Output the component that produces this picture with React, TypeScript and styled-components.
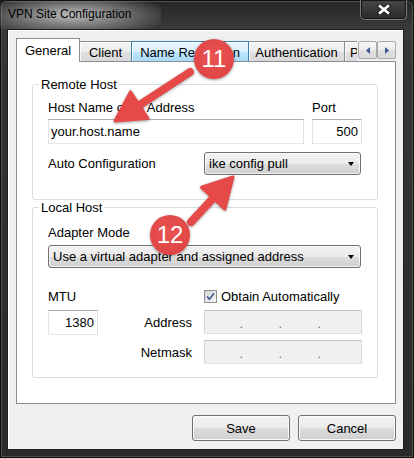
import React from 'react';
import styled, { createGlobalStyle } from 'styled-components';

const FONT = `'Liberation Sans', Arial, sans-serif`;

const GlobalStyle = createGlobalStyle`
  html, body { margin: 0; padding: 0; background: #1c1c1c; }
  body { font-family: ${FONT}; }
  *, *::before, *::after { box-sizing: border-box; }
`;

const Window = styled.div`
  position: relative;
  width: 414px;
  height: 458px;
  display: flex;
  flex-direction: column;
  overflow: hidden;
  border-radius: 7px 7px 0 0;
  background: linear-gradient(180deg, #242424 0px, #3a3a3a 28px, #343434 80px, #2a2a2a 100%);
  box-shadow: inset 0 0 0 1px #0c0c0c, inset 0 0 0 2px #505050;
`;

const TitleBar = styled.div`
  flex: none;
  height: 29px;
  display: flex;
  align-items: flex-start;
  justify-content: space-between;
`;

const Title = styled.div`
  margin-top: 1px;
  padding: 6px 30px 7px 8px;
  font-size: 12px;
  line-height: 15px;
  color: #000;
  background: radial-gradient(ellipse 62% 80% at 45% 50%, rgba(200,200,200,0.92) 0%, rgba(150,150,150,0.6) 55%, rgba(110,110,110,0) 100%);
`;

const CloseButton = styled.div`
  width: 47px;
  height: 20px;
  margin-right: 7px;
  border: 1px solid #7b7b7b;
  border-top: none;
  border-radius: 0 0 5px 5px;
  background: linear-gradient(180deg, #474747, #2a2a2a);
  box-shadow: inset 0 0 0 1px #151515;
  display: flex;
  align-items: center;
  justify-content: center;
`;

const Client = styled.div`
  flex: 1;
  margin: 0 10px 8px 7px;
  border: 1px solid #1e1e1e;
  box-shadow: inset 1px 1px 0 #ffffff;
  background: #f0f0f0;
  padding: 8px 7px 8px 8px;
  display: flex;
  flex-direction: column;
`;

const TabStrip = styled.div`
  flex: none;
  height: 23px;
  display: flex;
  position: relative;
  z-index: 1;
`;

const TabViewport = styled.div`
  flex: 1;
  min-width: 0;
  display: flex;
  align-items: flex-end;
  overflow-x: clip;
  overflow-y: visible;
`;

const Tab = styled.div<{ $active?: boolean; $hover?: boolean; $w: number; $left?: boolean }>`
  flex: none;
  width: ${(p) => p.$w}px;
  height: ${(p) => (p.$active ? 24 : 20)}px;
  margin-bottom: ${(p) => (p.$active ? -1 : 0)}px;
  margin-left: ${(p) => (p.$active ? 0 : -1)}px;
  position: relative;
  z-index: ${(p) => (p.$active ? 2 : p.$hover ? 1 : 0)};
  border: 1px solid ${(p) => (p.$hover ? '#3c7fb1' : '#898c95')};
  border-bottom: none;
  background: ${(p) =>
    p.$active
      ? '#ffffff'
      : p.$hover
      ? 'linear-gradient(180deg, #eaf6fd 0%, #d9f0fc 50%, #bee6fd 51%, #a9dbf6 100%)'
      : 'linear-gradient(180deg, #f4f4f4 0%, #ececec 50%, #e0e0e0 51%, #d9d9d9 100%)'};
  box-shadow: ${(p) => (p.$active ? 'none' : 'inset 1px 1px 0 rgba(255,255,255,0.85)')};
  display: flex;
  align-items: center;
  justify-content: ${(p) => (p.$left ? 'flex-start' : 'center')};
  padding: ${(p) => (p.$active ? '0 0 1px 0' : p.$left ? '2px 0 0 5px' : '2px 0 0 0')};
  font-size: 13px;
  line-height: 15px;
  color: #000;
  white-space: nowrap;
`;

const ScrollPair = styled.div`
  flex: none;
  width: 39px;
  height: 18px;
  margin-top: 3px;
  padding-left: 1px;
  display: flex;
`;

const ScrollButton = styled.div`
  width: 19px;
  height: 18px;
  border: 1px solid #a8aab0;
  border-radius: 2px;
  background: linear-gradient(180deg, #f6f6f6 0%, #ececec 50%, #e0e0e0 51%, #d9d9d9 100%);
  display: flex;
  align-items: center;
  justify-content: center;
`;

const Panel = styled.div`
  flex: none;
  height: 343px;
  border: 1px solid #898c95;
  background: #ffffff;
  padding: 15px 17px 0 15px;
  display: flex;
  flex-direction: column;
`;

const Group = styled.fieldset<{ $padTop: number; $padBottom: number }>`
  margin: 0;
  min-width: 0;
  border: 1px solid #d5dfe5;
  border-radius: 3px;
  padding: ${(p) => p.$padTop}px 16px ${(p) => p.$padBottom}px 15px;
`;

const GroupLegend = styled.legend`
  margin-left: -9px;
  padding: 0 2px;
  font-size: 13px;
  line-height: 15px;
  color: #000;
`;

const Label = styled.div<{ $align?: 'left' | 'right' }>`
  font-size: 13px;
  line-height: 15px;
  color: #000;
  white-space: nowrap;
  text-align: ${(p) => p.$align || 'left'};
`;

const SideLabel = styled(Label)`
  text-align: right;
  padding-right: 12px;
`;

const HostGrid = styled.div`
  display: grid;
  grid-template-columns: 256px 50px;
  column-gap: 8px;
  row-gap: 4px;
`;

const TextBox = styled.div<{ $align?: 'left' | 'right'; $h?: number }>`
  height: ${(p) => p.$h || 25}px;
  border: 1px solid;
  border-color: #abadb3 #dbdfe6 #e3e9ef #e2e3ea;
  background: #ffffff;
  display: flex;
  align-items: center;
  justify-content: ${(p) => (p.$align === 'right' ? 'flex-end' : 'flex-start')};
  padding: 0 3px 0 2px;
  font-size: 13px;
  color: #000;
`;

const FieldRow = styled.div<{ $mt: number }>`
  margin-top: ${(p) => p.$mt}px;
  display: flex;
  align-items: center;
`;

const RowLabel = styled(Label)<{ $w: number }>`
  width: ${(p) => p.$w}px;
  flex: none;
`;

const Select = styled.div<{ $w?: number; $mt?: number }>`
  width: ${(p) => (p.$w ? `${p.$w}px` : '100%')};
  margin-top: ${(p) => p.$mt || 0}px;
  height: 23px;
  border: 1px solid #707070;
  border-radius: 3px;
  background: linear-gradient(180deg, #f2f2f2 0%, #ebebeb 50%, #dddddd 51%, #cfcfcf 100%);
  box-shadow: inset 0 0 0 1px rgba(255, 255, 255, 0.7);
  display: flex;
  align-items: center;
  justify-content: space-between;
  padding: 0 4px 0 4px;
  font-size: 13px;
  color: #000;
`;

const Caret = styled.span`
  width: 0;
  height: 0;
  margin-right: 2px;
  border-left: 3.5px solid transparent;
  border-right: 3.5px solid transparent;
  border-top: 4px solid #000;
`;

const LocalGrid = styled.div`
  margin-top: 21px;
  display: grid;
  grid-template-columns: 50px 106px 158px;
  grid-template-rows: 15px 24px 24px;
  row-gap: 6px;
  align-items: center;
`;

const CheckWrap = styled.div`
  display: flex;
  align-items: center;
  gap: 4px;
`;

const CheckBox = styled.div`
  width: 13px;
  height: 13px;
  border: 1px solid #8f8f8f;
  background: linear-gradient(135deg, #d6d6d6, #f6f6f6);
  display: flex;
  align-items: center;
  justify-content: center;
`;

const IpField = styled.div`
  height: 24px;
  border: 1px solid;
  border-color: #c2c2c2 #d9d9d9 #e2e2e2 #d9d9d9;
  background: #f0f0f0;
  display: grid;
  grid-template-columns: repeat(4, 1fr);
`;

const Octet = styled.span`
  display: flex;
  align-items: center;
  justify-content: flex-end;
  padding: 3px 1px 0 0;
  font-size: 13px;
  color: #6d6d6d;
`;

const ButtonRow = styled.div`
  margin-top: 11px;
  display: flex;
  justify-content: flex-end;
  gap: 8px;
`;

const Button = styled.div`
  width: 98px;
  height: 26px;
  border: 1px solid #707070;
  border-radius: 3px;
  background: linear-gradient(180deg, #f2f2f2 0%, #ebebeb 50%, #dddddd 51%, #cfcfcf 100%);
  box-shadow: inset 0 0 0 1px #fbfbfb;
  display: flex;
  align-items: center;
  justify-content: center;
  font-size: 13px;
  color: #000;
`;

const Overlay = styled.svg`
  position: absolute;
  left: 0;
  top: 0;
  z-index: 10;
  pointer-events: none;
  filter: drop-shadow(0 1px 1.5px rgba(0, 0, 0, 0.35));
`;

const Badge = styled.div<{ $x: number; $y: number }>`
  position: absolute;
  z-index: 11;
  left: ${(p) => p.$x - 20}px;
  top: ${(p) => p.$y - 20}px;
  width: 40px;
  height: 40px;
  border-radius: 50%;
  background: radial-gradient(circle at 50% 40%, #ea5353 0%, #e04646 70%, #d23c3c 100%);
  box-shadow: 0 1px 3px rgba(0, 0, 0, 0.4);
  display: flex;
  align-items: center;
  justify-content: center;
  font-size: 24px;
  line-height: 1;
  color: #ffffff;
  padding-bottom: 1px;
`;

const RED = '#e54a48';

const Arrow: React.FC<{ tail: [number, number]; tip: [number, number] }> = ({ tail, tip }) => {
  const dx = tip[0] - tail[0];
  const dy = tip[1] - tail[1];
  const len = Math.hypot(dx, dy);
  const ux = dx / len;
  const uy = dy / len;
  const px = -uy;
  const py = ux;
  const headLen = 29;
  const half = 16;
  const bx = tip[0] - ux * headLen;
  const by = tip[1] - uy * headLen;
  const pts = [
    [tip[0], tip[1]],
    [bx + px * half, by + py * half],
    [bx - px * half, by - py * half],
  ]
    .map((p) => p.join(','))
    .join(' ');
  return (
    <g>
      <line
        x1={tail[0]}
        y1={tail[1]}
        x2={bx + ux * 4}
        y2={by + uy * 4}
        stroke={RED}
        strokeWidth={8}
        strokeLinecap="round"
      />
      <polygon points={pts} fill={RED} stroke={RED} strokeWidth={3} strokeLinejoin="round" />
    </g>
  );
};

const IpAddress: React.FC = () => (
  <IpField>
    <Octet>.</Octet>
    <Octet>.</Octet>
    <Octet>.</Octet>
    <Octet />
  </IpField>
);

export default function App() {
  return (
    <>
      <GlobalStyle />
      <Window>
        <TitleBar>
          <Title>VPN Site Configuration</Title>
          <CloseButton>
            <svg width="14" height="11" viewBox="0 0 14 11">
              <path d="M3 2.2 L11 8.8 M11 2.2 L3 8.8" stroke="#1a1a1a" strokeWidth="4.6" strokeLinecap="square" />
              <path d="M3 2.2 L11 8.8 M11 2.2 L3 8.8" stroke="#ffffff" strokeWidth="2.6" strokeLinecap="square" />
            </svg>
          </CloseButton>
        </TitleBar>
        <Client>
          <TabStrip>
            <TabViewport>
              <Tab $active $w={64}>General</Tab>
              <Tab $w={53}>Client</Tab>
              <Tab $hover $w={118}>Name Resolution</Tab>
              <Tab $w={97}>Authentication</Tab>
              <Tab $left $w={60}>P</Tab>
            </TabViewport>
            <ScrollPair>
              <ScrollButton>
                <svg width="4" height="7" viewBox="0 0 4 7">
                  <path d="M4 0 L0 3.5 L4 7 Z" fill="#3c5796" />
                </svg>
              </ScrollButton>
              <ScrollButton>
                <svg width="4" height="7" viewBox="0 0 4 7">
                  <path d="M0 0 L4 3.5 L0 7 Z" fill="#3c5796" />
                </svg>
              </ScrollButton>
            </ScrollPair>
          </TabStrip>
          <Panel>
            <Group $padTop={8} $padBottom={24}>
              <GroupLegend>Remote Host</GroupLegend>
              <HostGrid>
                <Label>Host Name or IP Address</Label>
                <Label>Port</Label>
                <TextBox>your.host.name</TextBox>
                <TextBox $align="right">500</TextBox>
              </HostGrid>
              <FieldRow $mt={8}>
                <RowLabel $w={156}>Auto Configuration</RowLabel>
                <Select $w={158}>
                  <span>ike config pull</span>
                  <Caret />
                </Select>
              </FieldRow>
            </Group>
            <Group $padTop={10} $padBottom={13}>
              <GroupLegend>Local Host</GroupLegend>
              <Label>Adapter Mode</Label>
              <Select $mt={5}>
                <span>Use a virtual adapter and assigned address</span>
                <Caret />
              </Select>
              <LocalGrid>
                <Label>MTU</Label>
                <span />
                <CheckWrap>
                  <CheckBox>
                    <svg width="9" height="9" viewBox="0 0 9 9">
                      <path d="M1 4.5 L3.5 7.2 L8 1.2" fill="none" stroke="#4a5f9c" strokeWidth="1.8" />
                    </svg>
                  </CheckBox>
                  <Label>Obtain Automatically</Label>
                </CheckWrap>
                <TextBox $align="right">1380</TextBox>
                <SideLabel>Address</SideLabel>
                <IpAddress />
                <span />
                <SideLabel>Netmask</SideLabel>
                <IpAddress />
              </LocalGrid>
            </Group>
          </Panel>
          <ButtonRow>
            <Button>Save</Button>
            <Button>Cancel</Button>
          </ButtonRow>
        </Client>
        <Overlay width="414" height="458" viewBox="0 0 414 458">
          <Arrow tail={[190, 72]} tip={[115, 121]} />
          <Arrow tail={[191, 222]} tip={[233, 177]} />
        </Overlay>
        <Badge $x={214} $y={59}>11</Badge>
        <Badge $x={170} $y={235}>12</Badge>
      </Window>
    </>
  );
}
